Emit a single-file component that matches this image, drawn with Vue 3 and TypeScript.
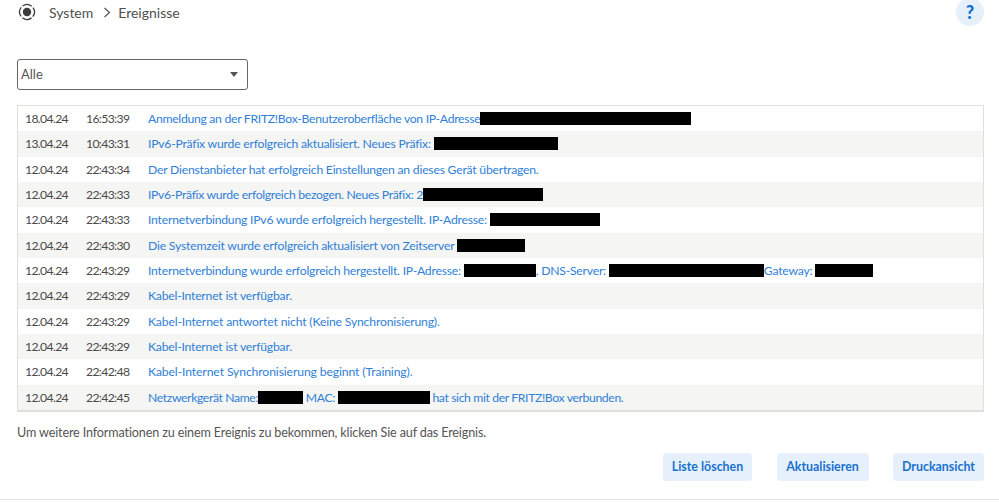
<script setup lang="ts">
type Part = { t?: string; r?: number };
interface Row { d: string; c: string; ls?: number; parts: Part[] }
const rows: Row[] = [
  { d: '18.04.24', c: '16:53:39', ls: -0.07, parts: [{ t: 'Anmeldung an der FRITZ!Box-Benutzeroberfläche von IP-Adresse' }, { r: 211 }] },
  { d: '13.04.24', c: '10:43:31', parts: [{ t: 'IPv6-Präfix wurde erfolgreich aktualisiert. Neues Präfix: ' }, { r: 124 }] },
  { d: '12.04.24', c: '22:43:34', parts: [{ t: 'Der Dienstanbieter hat erfolgreich Einstellungen an dieses Gerät übertragen.' }] },
  { d: '12.04.24', c: '22:43:33', ls: -0.09, parts: [{ t: 'IPv6-Präfix wurde erfolgreich bezogen. Neues Präfix: 2' }, { r: 120 }] },
  { d: '12.04.24', c: '22:43:33', parts: [{ t: 'Internetverbindung IPv6 wurde erfolgreich hergestellt. IP-Adresse: ' }, { r: 110 }] },
  { d: '12.04.24', c: '22:43:30', ls: 0.03, parts: [{ t: 'Die Systemzeit wurde erfolgreich aktualisiert von Zeitserver ' }, { r: 68 }] },
  { d: '12.04.24', c: '22:43:29', parts: [{ t: 'Internetverbindung wurde erfolgreich hergestellt. IP-Adresse: ' }, { r: 72 }, { t: ', DNS-Server: ' }, { r: 155 }, { t: 'Gateway: ' }, { r: 58 }] },
  { d: '12.04.24', c: '22:43:29', parts: [{ t: 'Kabel-Internet ist verfügbar.' }] },
  { d: '12.04.24', c: '22:43:29', ls: 0.05, parts: [{ t: 'Kabel-Internet antwortet nicht (Keine Synchronisierung).' }] },
  { d: '12.04.24', c: '22:43:29', parts: [{ t: 'Kabel-Internet ist verfügbar.' }] },
  { d: '12.04.24', c: '22:42:48', ls: 0.1, parts: [{ t: 'Kabel-Internet Synchronisierung beginnt (Training).' }] },
  { d: '12.04.24', c: '22:42:45', ls: -0.15, parts: [{ t: 'Netzwerkgerät Name:' }, { r: 45 }, { t: ' MAC: ' }, { r: 92 }, { t: ' hat sich mit der FRITZ!Box verbunden.' }] },
];
const spacing = (r: Row): string => `${(-0.22 + (r.ls ?? 0)).toFixed(2)}px`;
const buttons = ['Liste löschen', 'Aktualisieren', 'Druckansicht'];
</script>

<template>
  <div class="page">
    <header class="top">
      <div class="crumbs">
        <svg class="ico" width="18" height="18" viewBox="0 0 18 18" fill="none">
          <circle cx="9" cy="9" r="7.4" stroke="#3c3c3c" stroke-width="1.3" stroke-dasharray="9.6 2" transform="rotate(52.7 9 9)"/>
          <circle cx="9" cy="9" r="4.2" fill="#3c3c3c"/>
        </svg>
        <span class="crumb">System</span>
        <svg class="chev" width="8" height="11" viewBox="0 0 8 11" fill="none">
          <path d="M1.5 1l5 4.5-5 4.5" stroke="#555" stroke-width="1.2"/>
        </svg>
        <span class="crumb">Ereignisse</span>
      </div>
      <div class="help">?</div>
    </header>

    <div class="select">
      <span class="sel-text">Alle</span>
      <i class="caret"></i>
    </div>

    <div class="table">
      <div v-for="(r, i) in rows" :key="i" class="row">
        <span class="date">{{ r.d }}</span>
        <span class="time">{{ r.c }}</span>
        <span class="msg" :style="{ letterSpacing: spacing(r) }">
          <template v-for="(p, j) in r.parts" :key="j">
            <span v-if="p.t" class="txt">{{ p.t }}</span>
            <span v-else class="red" :style="{ width: p.r + 'px' }"></span>
          </template>
        </span>
      </div>
    </div>

    <p class="hint">Um weitere Informationen zu einem Ereignis zu bekommen, klicken Sie auf das Ereignis.</p>

    <div class="actions">
      <button v-for="b in buttons" :key="b" class="btn">{{ b }}</button>
    </div>
    <div class="rule"></div>
  </div>
</template>

<style>
html, body { margin: 0; background: #fff; overflow: hidden; }
</style>

<style scoped>
.page {
  width: 999px;
  height: 503px;
  box-sizing: border-box;
  padding: 0 15px 0 17px;
  font-family: "Lato", "Noto Sans", sans-serif;
  font-size: 12.2px;
  color: #4a4a4a;
  display: flex;
  flex-direction: column;
  overflow: hidden;
}
.top {
  height: 59px;
  flex: none;
  display: flex;
  justify-content: space-between;
  align-items: flex-start;
}
.crumbs { display: flex; align-items: center; height: 25px; color: #505050; font-size: 14px; }
.ico { margin-left: 1px; margin-right: 13px; margin-top: -2px; }
.chev { margin: 0 7px 0 10px; }
.help {
  width: 28px;
  height: 28px;
  margin-top: -2px;
  border-radius: 50%;
  background: #e6f0fa;
  color: #0f6fd6;
  font-weight: 900;
  font-size: 18px;
  line-height: 28px;
  text-align: center;
}
.select {
  width: 231px;
  height: 31px;
  flex: none;
  box-sizing: border-box;
  border: 1px solid #666;
  border-radius: 3px;
  padding: 0 9px 0 3px;
  display: flex;
  align-items: center;
  justify-content: space-between;
  font-size: 13px;
  color: #555;
}
.sel-text { margin-bottom: 1px; }
.caret {
  width: 0;
  height: 0;
  border-left: 4.5px solid transparent;
  border-right: 4.5px solid transparent;
  border-top: 5px solid #555;
}
.table {
  margin-top: 15px;
  border: 1px solid #e0e0da;
  border-bottom-width: 2px;
  flex: none;
}
.row {
  height: 25.33px;
  display: flex;
  align-items: center;
  white-space: nowrap;
}
.row:nth-child(even) { background: #f5f5f3; }
.date, .time { color: #4a4a4a; letter-spacing: -0.65px; }
.date { width: 61px; margin-left: 7px; }
.time { width: 62px; }
.msg { color: #2f80d8; display: flex; align-items: center; }
.txt { white-space: pre; }
.red { display: inline-block; height: 13px; background: #000; }
.hint { margin: 13px 0 0; line-height: 16px; font-size: 12.6px; letter-spacing: -0.14px; color: #555; }
.actions {
  display: flex;
  justify-content: flex-end;
  gap: 24.5px;
  margin-top: 12px;
}
.btn {
  height: 28px;
  width: 89px;
  padding: 0;
  border: 1px solid #e9f1fa;
  border-radius: 3px;
  background: #e6f0fa;
  color: #1a70d0;
  font: 700 12.4px "Lato", sans-serif;
}
.btn:nth-child(2) { width: 92px; }
.btn:nth-child(3) { width: 91px; }
.rule {
  margin: 18px -15px 0 -17px;
  height: 1px;
  background: #e4e4e4;
  flex: none;
}
</style>
